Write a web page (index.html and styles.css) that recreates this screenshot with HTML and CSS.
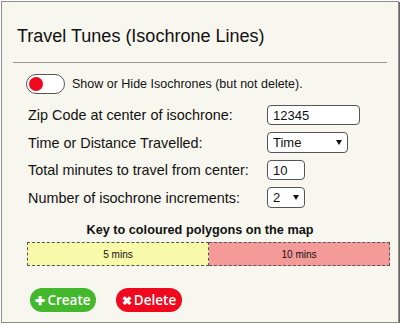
FILE: index.html
```html
<!DOCTYPE html>
<html lang="en">
<head>
    <meta charset="UTF-8">
    <title>Travel Tunes</title>
    <link rel="stylesheet" href="styles.css">
</head>
<body>
    <section class="panel">
        <h1 class="title">Travel Tunes (Isochrone Lines)</h1>
        <hr class="rule">
        <div class="toggleRow">
            <span class="toggle"><span class="dot"></span></span>
            <span class="toggleText">Show or Hide Isochrones (but not delete).</span>
        </div>
        <div class="form">
            <label for="zip">Zip Code at center of isochrone:</label>
            <input type="text" id="zip" class="field wide" value="12345">
            <label for="mode">Time or Distance Travelled:</label>
            <span class="pick mid"><select id="mode"><option>Time</option><option>Distance</option></select></span>
            <label for="mins">Total minutes to travel from center:</label>
            <input type="text" id="mins" class="field short" value="10">
            <label for="steps">Number of isochrone increments:</label>
            <span class="pick short"><select id="steps"><option>2</option><option>3</option></select></span>
        </div>
        <h2 class="keyTitle">Key to coloured polygons on the map</h2>
        <div class="key">
            <div class="cell yellow">5 mins</div>
            <div class="cell red">10 mins</div>
        </div>
        <div class="actions">
            <button class="btn create"><span class="ico">&#10010;</span>Create</button>
            <button class="btn delete"><span class="ico">&#10006;</span>Delete</button>
        </div>
    </section>
</body>
</html>
```
FILE: styles.css
```css
body,
h1,
h2{
    margin: 0;
}
body{
    font-family: "Liberation Sans", Arial, sans-serif;
    color: #111;
    background: #fff;
}
.panel{
    box-sizing: border-box;
    width: 398px;
    height: 322px;
    margin: 1px 0 0 1px;
    padding: 0 11px;
    background: #f8f7ef;
    border: 1px solid #8c8c8c;
    box-shadow: 1px 1px 0 #666;
}
.title{
    margin: 24px 0 0 4px;
    font-size: 18px;
    line-height: 21px;
    font-weight: normal;
}
.rule{
    margin: 15px 0 0;
    border: 0;
    border-top: 1px solid #999;
}
.toggleRow{
    display: flex;
    align-items: center;
    gap: 7px;
    margin: 11px 0 0 13px;
}
.toggle{
    box-sizing: border-box;
    display: flex;
    align-items: center;
    width: 39px;
    height: 20px;
    padding-left: 2px;
    border: 1px solid #555;
    border-radius: 10px;
    background: #fff;
}
.dot{
    width: 14px;
    height: 14px;
    border-radius: 50%;
    background: #f0081e;
}
.toggleText{
    font-size: 12.5px;
}
.form{
    display: grid;
    grid-template-columns: 239px auto;
    row-gap: 7px;
    align-items: center;
    margin: 11px 0 0 15px;
    font-size: 14.4px;
    white-space: nowrap;
}
.field{
    box-sizing: border-box;
    height: 20px;
    padding: 0 5px;
    border: 1px solid #555;
    border-radius: 4px;
    background: #fff;
    font: 13px "Liberation Sans", Arial, sans-serif;
    color: #111;
    outline: none;
}
.wide{
    width: 93px;
}
.short{
    width: 38px;
}
.pick{
    position: relative;
    display: block;
}
.pick.mid{
    width: 81px;
}
.pick select{
    box-sizing: border-box;
    width: 100%;
    height: 21px;
    padding: 0 0 0 5px;
    border: 1px solid #555;
    border-radius: 4px;
    background: #fff;
    font: 13px "Liberation Sans", Arial, sans-serif;
    color: #111;
    appearance: none;
    -webkit-appearance: none;
}
.pick::after{
    content: "";
    position: absolute;
    right: 6px;
    top: 8px;
    border-left: 3px solid transparent;
    border-right: 3px solid transparent;
    border-top: 5px solid #111;
    pointer-events: none;
}
.keyTitle{
    margin-top: 15px;
    font-size: 12.7px;
    line-height: 15px;
    text-align: center;
}
.key{
    display: flex;
    margin: 4px 0 0 14px;
    width: 363px;
    height: 24px;
}
.cell{
    flex: 1;
    display: flex;
    align-items: center;
    justify-content: center;
    font-size: 10px;
    border: 1px dashed #555;
}
.yellow{
    background: #f9f9aa;
}
.red{
    background: #f49a98;
    border-left: 0;
}
.actions{
    display: flex;
    gap: 20px;
    margin: 22px 0 0 17px;
}
.btn{
    display: flex;
    align-items: center;
    justify-content: center;
    gap: 2px;
    width: 66px;
    height: 24px;
    padding: 0;
    border: 0;
    border-radius: 12px;
    color: #fff;
    font: 600 13.5px "Open Sans", sans-serif;
}
.ico{
    font-size: 12px;
}
.create{
    background: #44b82c;
}
.delete{
    background: #f0081e;
}
```
